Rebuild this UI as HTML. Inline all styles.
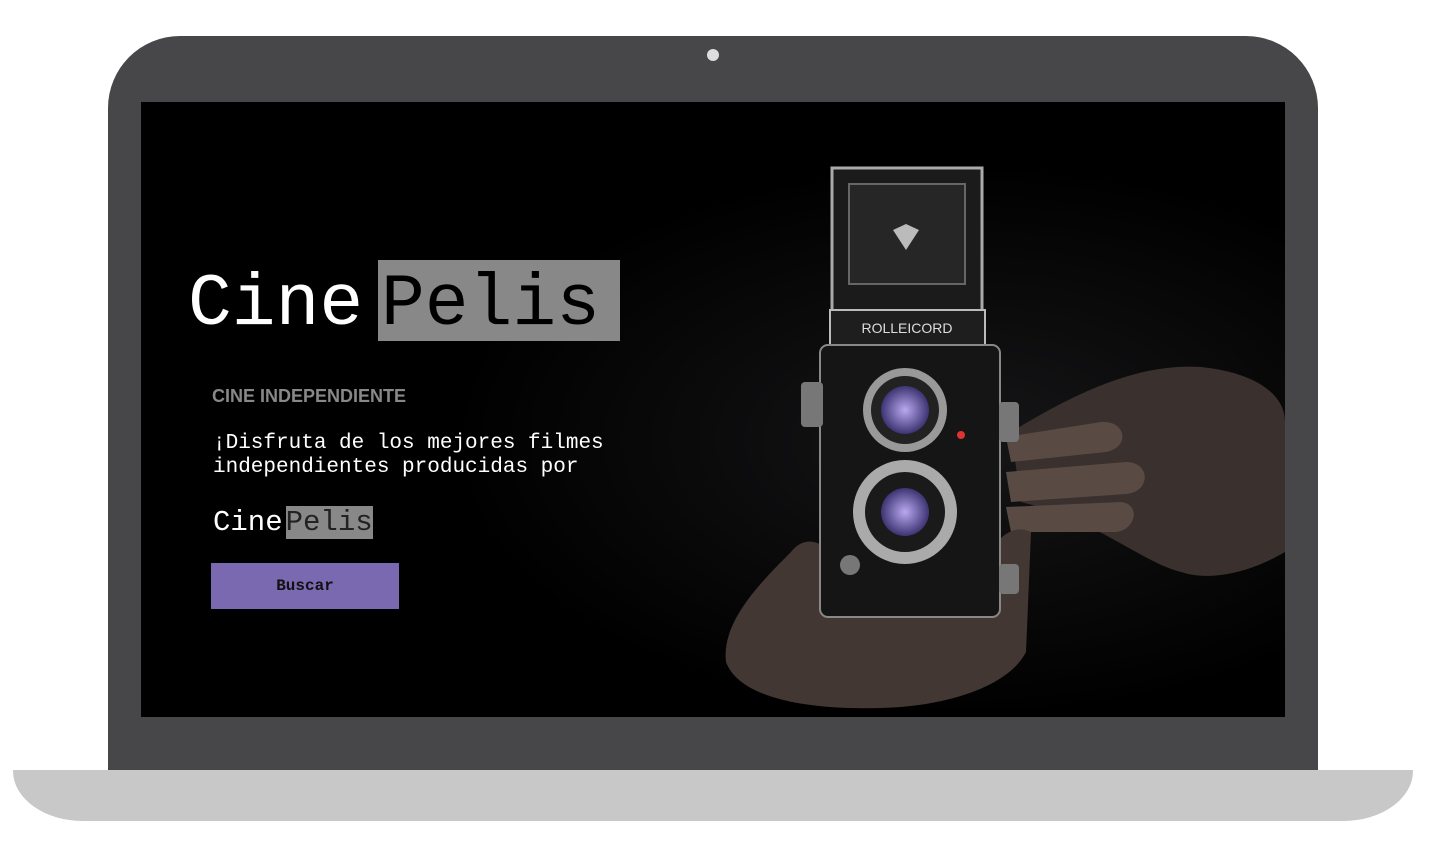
<!DOCTYPE html>
<html><head><meta charset="utf-8"><style>
*{margin:0;padding:0;box-sizing:border-box}
body{width:1454px;height:857px;background:#fff;position:relative;overflow:hidden;font-family:"Liberation Mono",monospace}
.lid{position:absolute;left:108px;top:36px;width:1210px;height:740px;background:#474749;border-radius:72px 72px 0 0}
.cam{position:absolute;left:707px;top:49px;width:12px;height:12px;border-radius:50%;background:#ddd}
.screen{position:absolute;left:141px;top:102px;width:1144px;height:615px;background:#000;overflow:hidden}
.base{position:absolute;left:13px;top:770px;width:1400px;height:51px;background:#c8c8c8;border-radius:0 0 70px 70px / 0 0 50px 50px}
.t{position:absolute;white-space:pre}
</style></head><body>
<div class="lid"></div><div class="cam"></div>
<div class="screen">
<svg width="1144" height="615" style="position:absolute;left:0;top:0">
<defs><radialGradient id="g" cx="0.5" cy="0.5" r="0.5"><stop offset="0" stop-color="#b9a8f0"/><stop offset="1" stop-color="#3d3472"/></radialGradient>
<radialGradient id="bg" cx="0.72" cy="0.55" r="0.45"><stop offset="0" stop-color="#161618"/><stop offset="1" stop-color="#000"/></radialGradient></defs>
<rect width="1144" height="615" fill="url(#bg)"/>
<path d="M870 330 C920 300 990 260 1060 265 C1110 270 1144 290 1144 320 L1144 450 C1110 470 1070 480 1040 470 C1000 460 960 420 880 400 Z" fill="#3a302d"/>
<path d="M865 335 L960 320 C985 318 990 345 965 350 L870 360 Z M865 370 L985 360 C1010 360 1010 390 985 392 L870 400 Z M865 405 L980 400 C1000 402 995 428 975 430 L870 430 Z" fill="#5a4a44"/>
<path d="M650 450 C620 480 580 520 585 560 C600 600 680 610 760 605 C820 600 870 580 885 550 L890 430 C870 420 850 440 840 470 L700 470 C690 440 665 430 650 450 Z" fill="#433733"/>
<path d="M760 470 C770 500 800 510 805 490 L800 440 C790 420 765 430 760 470 Z" fill="#5e4d46"/>
<rect x="691" y="66" width="150" height="144" fill="#1b1b1b" stroke="#aaa" stroke-width="3"/>
<rect x="708" y="82" width="116" height="100" fill="#262626" stroke="#666" stroke-width="2"/>
<path d="M752 128 L765 122 L778 128 L765 148 Z" fill="#bbb"/>
<rect x="689" y="208" width="155" height="35" fill="#1e1e1e" stroke="#bbb" stroke-width="2"/>
<text x="766" y="231" font-family="Liberation Sans" font-size="14" fill="#ddd" text-anchor="middle">ROLLEICORD</text>
<rect x="679" y="243" width="180" height="272" rx="8" fill="#151515" stroke="#888" stroke-width="2"/>
<rect x="660" y="280" width="22" height="45" rx="4" fill="#777"/>
<rect x="858" y="300" width="20" height="40" rx="4" fill="#777"/>
<rect x="858" y="462" width="20" height="30" rx="4" fill="#777"/>
<circle cx="764" cy="308" r="42" fill="#999"/><circle cx="764" cy="308" r="34" fill="#222"/><circle cx="764" cy="308" r="24" fill="url(#g)"/>
<circle cx="764" cy="410" r="52" fill="#aaa"/><circle cx="764" cy="410" r="40" fill="#1a1a1a"/><circle cx="764" cy="410" r="24" fill="url(#g)"/>
<circle cx="820" cy="333" r="4" fill="#d33"/>
<circle cx="709" cy="463" r="10" fill="#777"/>
</svg>
<div class="t" style="left:47px;top:162px;font-size:73px;line-height:82px;color:#fff">Cine</div>
<div class="t" style="left:237px;top:158px;width:242px;height:81px;background:#888;font-size:73px;line-height:90px;color:#000;padding-left:3px">Pelis</div>
<div class="t" style="left:71px;top:284px;font-family:'Liberation Sans',sans-serif;font-weight:bold;font-size:18px;color:#888">CINE INDEPENDIENTE</div>
<div class="t" style="left:72px;top:330px;font-size:21px;line-height:24px;color:#fff">¡Disfruta de los mejores filmes
independientes producidas por</div>
<div class="t" style="left:72px;top:406px;font-size:29px;line-height:30px;color:#fff">Cine<span style="background:#888;color:#222;margin-left:3px">Pelis</span></div>
<div class="t" style="left:70px;top:461px;width:188px;height:46px;background:#7a68b0;color:#111;font-weight:bold;font-size:16px;line-height:46px;text-align:center">Buscar</div>
</div>
<div class="base"></div>
</body></html>
